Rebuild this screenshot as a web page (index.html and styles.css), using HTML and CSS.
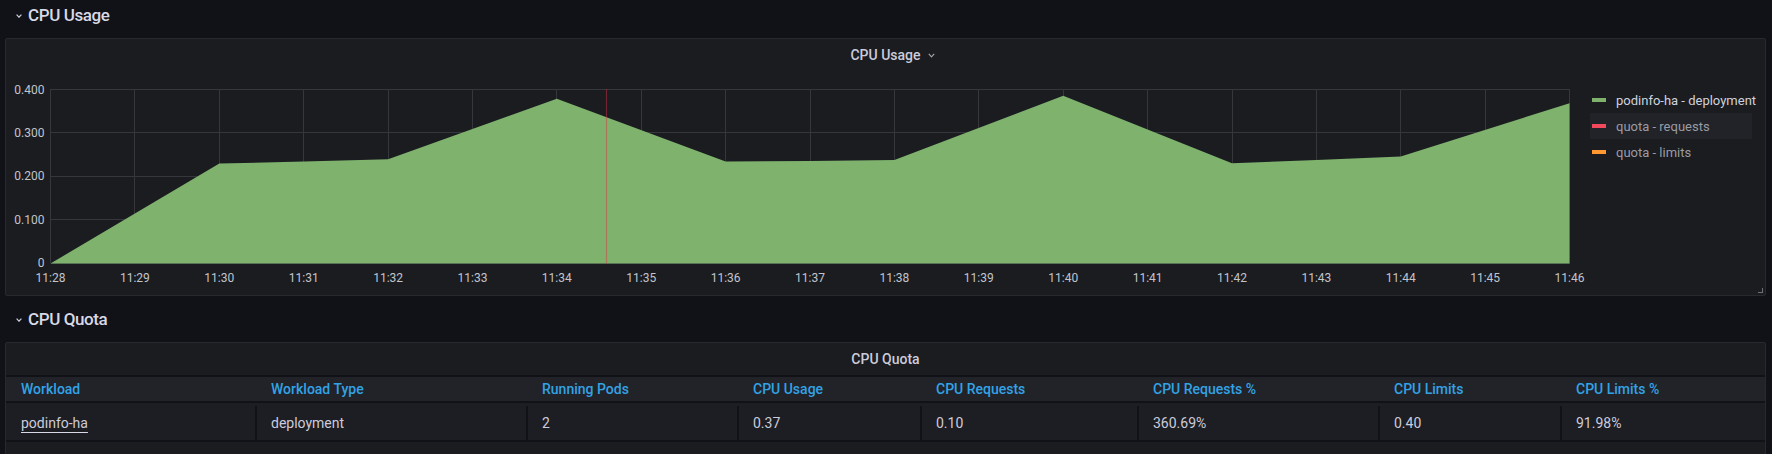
FILE: index.html
```html
<!DOCTYPE html>
<html lang="en">
<head>
<meta charset="utf-8">
<title>CPU Usage</title>
<link rel="stylesheet" href="styles.css">
</head>
<body>
<div class="dashboard">
  <div class="row-header">
    <svg class="row-chevron" width="6" height="4" viewBox="0 0 6 4"><path d="M0.6 0.6 L3 3.2 L5.4 0.6" fill="none" stroke="#ccccdc" stroke-width="1.2"/></svg>
    <span class="row-title">CPU Usage</span>
  </div>

  <section class="panel panel-graph">
    <header class="panel-header">
      <span class="panel-title">CPU Usage<svg class="title-chevron" width="7" height="5" viewBox="0 0 7 5"><path d="M0.8 0.8 L3.5 3.8 L6.2 0.8" fill="none" stroke="#9fa0a8" stroke-width="1.2"/></svg></span>
    </header>
    <div class="graph-body">
      <svg class="plot" width="1584" height="224" viewBox="0 0 1584 224">
        <g class="grid" stroke="#35373c" stroke-width="1" shape-rendering="crispEdges">
          <line x1="44.5" y1="18.5" x2="1563.5" y2="18.5"/>
          <line x1="44.5" y1="61.5" x2="1563.5" y2="61.5"/>
          <line x1="44.5" y1="105.5" x2="1563.5" y2="105.5"/>
          <line x1="44.5" y1="148.5" x2="1563.5" y2="148.5"/>
          <line x1="44.5" y1="192.5" x2="1563.5" y2="192.5"/>
          <line x1="44.5" y1="18" x2="44.5" y2="192"/>
          <line x1="128.5" y1="18" x2="128.5" y2="192"/>
          <line x1="213.5" y1="18" x2="213.5" y2="192"/>
          <line x1="297.5" y1="18" x2="297.5" y2="192"/>
          <line x1="382.5" y1="18" x2="382.5" y2="192"/>
          <line x1="466.5" y1="18" x2="466.5" y2="192"/>
          <line x1="550.5" y1="18" x2="550.5" y2="192"/>
          <line x1="635.5" y1="18" x2="635.5" y2="192"/>
          <line x1="719.5" y1="18" x2="719.5" y2="192"/>
          <line x1="804.5" y1="18" x2="804.5" y2="192"/>
          <line x1="888.5" y1="18" x2="888.5" y2="192"/>
          <line x1="972.5" y1="18" x2="972.5" y2="192"/>
          <line x1="1057.5" y1="18" x2="1057.5" y2="192"/>
          <line x1="1141.5" y1="18" x2="1141.5" y2="192"/>
          <line x1="1226.5" y1="18" x2="1226.5" y2="192"/>
          <line x1="1310.5" y1="18" x2="1310.5" y2="192"/>
          <line x1="1394.5" y1="18" x2="1394.5" y2="192"/>
          <line x1="1479.5" y1="18" x2="1479.5" y2="192"/>
          <line x1="1563.5" y1="18" x2="1563.5" y2="192"/>
        </g>
        <polygon fill="#7eb26d" points="44.5,192.5 213.3,92.5 297.7,90.6 382.1,88.2 550.8,27.8 719.6,90.4 804,89.9 888.4,89.1 1057.2,24.8 1226,92.2 1310.4,89.1 1394.7,85.6 1563.5,32.2 1563.5,192.5"/>
        <line x1="600.5" y1="18" x2="600.5" y2="192.5" stroke="#e02f44" stroke-opacity="0.45" stroke-width="1.2"/>
        <g class="y-labels" text-anchor="end">
          <text x="38.5" y="22.5">0.400</text>
          <text x="38.5" y="65.9">0.300</text>
          <text x="38.5" y="109.3">0.200</text>
          <text x="38.5" y="152.8">0.100</text>
          <text x="38.5" y="196.2">0</text>
        </g>
        <g class="x-labels" text-anchor="middle">
          <text x="44.5" y="211">11:28</text>
          <text x="128.9" y="211">11:29</text>
          <text x="213.3" y="211">11:30</text>
          <text x="297.7" y="211">11:31</text>
          <text x="382.1" y="211">11:32</text>
          <text x="466.5" y="211">11:33</text>
          <text x="550.8" y="211">11:34</text>
          <text x="635.2" y="211">11:35</text>
          <text x="719.6" y="211">11:36</text>
          <text x="804" y="211">11:37</text>
          <text x="888.4" y="211">11:38</text>
          <text x="972.8" y="211">11:39</text>
          <text x="1057.2" y="211">11:40</text>
          <text x="1141.6" y="211">11:41</text>
          <text x="1226" y="211">11:42</text>
          <text x="1310.4" y="211">11:43</text>
          <text x="1394.7" y="211">11:44</text>
          <text x="1479.1" y="211">11:45</text>
          <text x="1563.5" y="211">11:46</text>
        </g>
      </svg>
      <ul class="legend">
        <li class="legend-item"><span class="swatch swatch-green"></span><span class="legend-label">podinfo-ha - deployment</span></li>
        <li class="legend-item legend-item-hover legend-item-hidden"><span class="swatch swatch-red"></span><span class="legend-label">quota - requests</span></li>
        <li class="legend-item legend-item-hidden"><span class="swatch swatch-orange"></span><span class="legend-label">quota - limits</span></li>
      </ul>
    </div>
    <span class="resize-handle"></span>
  </section>

  <div class="row-header row-header-second">
    <svg class="row-chevron" width="6" height="4" viewBox="0 0 6 4"><path d="M0.6 0.6 L3 3.2 L5.4 0.6" fill="none" stroke="#ccccdc" stroke-width="1.2"/></svg>
    <span class="row-title">CPU Quota</span>
  </div>

  <section class="panel panel-table">
    <header class="panel-header">
      <span class="panel-title">CPU Quota</span>
    </header>
    <div class="table">
      <div class="table-head">
        <div class="th">Workload</div>
        <div class="th">Workload Type</div>
        <div class="th">Running Pods</div>
        <div class="th">CPU Usage</div>
        <div class="th">CPU Requests</div>
        <div class="th">CPU Requests %</div>
        <div class="th">CPU Limits</div>
        <div class="th">CPU Limits %</div>
      </div>
      <div class="table-row">
        <div class="td"><a class="cell-link" href="#">podinfo-ha</a></div>
        <div class="td">deployment</div>
        <div class="td">2</div>
        <div class="td">0.37</div>
        <div class="td">0.10</div>
        <div class="td">360.69%</div>
        <div class="td">0.40</div>
        <div class="td td-last">91.98%</div>
      </div>
    </div>
  </section>
</div>
</body>
</html>
```

FILE: styles.css
```css
* {
  box-sizing: border-box;
}

html, body {
  margin: 0;
  padding: 0;
  background: #111217;
  height: 454px;
  overflow: hidden;
}

body {
  font-family: Roboto, "Noto Sans", "Liberation Sans", sans-serif;
  color: #ccccdc;
}

.dashboard {
  display: flex;
  flex-direction: column;
}

.row-header {
  height: 30px;
  margin-bottom: 8px;
  display: flex;
  align-items: center;
  padding-left: 16px;
  gap: 6px;
}

.row-header-second {
  margin-top: 8px;
}

.row-chevron {
  display: block;
  margin-top: 1px;
}

.row-title {
  font-size: 17px;
  font-weight: 500;
  color: #d8d9e6;
  letter-spacing: -0.4px;
}

.panel {
  position: relative;
  margin-left: 5px;
  width: 1761px;
  background: #1a1c20;
  border: 1px solid #27292e;
  border-radius: 2px;
}

.panel-graph {
  height: 258px;
}

.panel-table {
  height: 120px;
}

.panel-header {
  height: 32px;
  display: flex;
  align-items: center;
  justify-content: center;
}

.panel-title {
  position: relative;
  font-size: 14px;
  font-weight: 500;
  color: #ccccdc;
}

.title-chevron {
  position: absolute;
  left: calc(100% + 7px);
  top: 6px;
}

.graph-body {
  display: flex;
  height: 224px;
}

.plot {
  display: block;
  flex: 0 0 1584px;
}

.plot text {
  font-family: Roboto, "Noto Sans", sans-serif;
  font-size: 12px;
  fill: #c3c4cc;
}

.legend {
  list-style: none;
  margin: 16px 0 0 0;
  padding: 0;
  width: 162px;
}

.legend-item {
  height: 26px;
  display: flex;
  align-items: center;
  padding-left: 2px;
  font-size: 13px;
  color: #d0d1dc;
  white-space: nowrap;
}

.legend-item-hidden {
  color: #9a9ba4;
}

.legend-item-hover {
  background: #212328;
}

.swatch {
  width: 14px;
  height: 4px;
  margin-right: 10px;
  flex: none;
}

.swatch-green { background: #7eb26d; }
.swatch-red { background: #f2495c; }
.swatch-orange { background: #ff9830; }

.resize-handle {
  position: absolute;
  right: 2px;
  bottom: 2px;
  width: 5px;
  height: 5px;
  border-right: 1.5px solid #6e7077;
  border-bottom: 1.5px solid #6e7077;
}

.table {
  display: flex;
  flex-direction: column;
}

.table-head,
.table-row {
  display: grid;
  grid-template-columns: 251px 271px 211px 183px 217px 241px 182px 203px;
}

.table-head {
  height: 28px;
  border-top: 2px solid #111217;
  border-bottom: 2px solid #111217;
  background: #212328;
  align-items: center;
}

.th {
  padding-left: 14px;
  font-size: 14px;
  font-weight: 500;
  color: #33a2e5;
  white-space: nowrap;
}

.th:first-child {
  padding-left: 15px;
}

.table-row {
  height: 39px;
  padding-top: 3px;
  background: #1c1e23;
  border-bottom: 2px solid #111217;
}

.td {
  display: flex;
  align-items: center;
  padding-left: 14px;
  font-size: 14px;
  color: #ccccdc;
  border-right: 2px solid #111217;
  white-space: nowrap;
}

.td:first-child {
  padding-left: 15px;
}

.td-last {
  border-right: none;
}

.cell-link {
  color: #ccccdc;
  text-decoration: underline;
  text-decoration-color: #d8d9e6;
  text-underline-offset: 4px;
  text-decoration-thickness: 1px;
}
```
